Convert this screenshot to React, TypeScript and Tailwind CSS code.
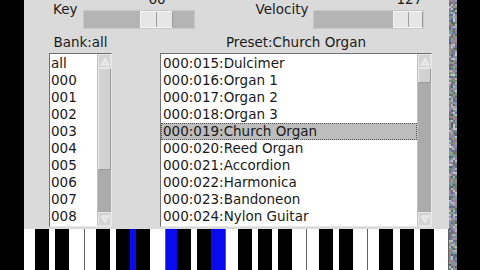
import React from "react";

const FONT = "font-['DejaVu_Sans',sans-serif]";

const banks = ["all", "000", "001", "002", "003", "004", "005", "006", "007", "008"];
const presets = [
  "000:015:Dulcimer",
  "000:016:Organ 1",
  "000:017:Organ 2",
  "000:018:Organ 3",
  "000:019:Church Organ",
  "000:020:Reed Organ",
  "000:021:Accordion",
  "000:022:Harmonica",
  "000:023:Bandoneon",
  "000:024:Nylon Guitar",
];

function Arrow({ up }: { up: boolean }) {
  return (
    <div className="h-[14px] w-full bg-[#d3d3d3] border border-[#e6e6e6] flex items-center justify-center">
      <svg width="10" height="9" viewBox="0 0 10 9">
        {up ? (
          <polygon points="5,1 9,8 1,8" fill="#e2e2e2" stroke="#f2f2f2" strokeWidth="1" />
        ) : (
          <polygon points="1,1 9,1 5,8" fill="#e2e2e2" stroke="#f2f2f2" strokeWidth="1" />
        )}
      </svg>
    </div>
  );
}

function Noise() {
  const rects: React.ReactNode[] = [];
  let s = 12345;
  const rnd = () => {
    s = (s * 1103515245 + 12345) % 2147483648;
    return s / 2147483648;
  };
  const palette = ["#8a8a9a", "#6e8f7a", "#9a7fa0", "#7a9aa0", "#b0b0b0", "#5f6f8f", "#8fa07a", "#a07a8a", "#707070", "#c0c0c8", "#4a6a6a", "#9090c0"];
  for (let y = 0; y < 270; y += 2) {
    for (let x = 0; x < 8; x += 2) {
      const c = palette[Math.floor(rnd() * palette.length)];
      rects.push(<rect key={`${x}-${y}`} x={x} y={y} width="2" height="2" fill={c} />);
    }
  }
  return (
    <svg width="8" height="270" viewBox="0 0 8 270" className="block">
      {rects}
    </svg>
  );
}

function Keyboard() {
  const whiteCount = 21;
  const W = 425 / whiteCount;
  const pressed = new Set([5, 7, 9]);
  const blackAfter = [0, 1, 3, 4, 5]; // C#, D#, F#, G#, A#
  const blacks: number[] = [];
  for (let o = 0; o < 3; o++) {
    for (const b of blackAfter) blacks.push(o * 7 + b + 1);
  }
  return (
    <div className="relative h-[41px] w-[425px] flex bg-white">
      {Array.from({ length: whiteCount }).map((_, i) => (
        <div
          key={i}
          className={`flex-1 h-full border-r border-[#606060] ${pressed.has(i) ? "bg-[#0a0aee]" : "bg-white"}`}
        />
      ))}
      {blacks.map((k) => (
        <div
          key={k}
          className="absolute top-0 h-full w-[14px] bg-black"
          style={{ left: `${k * W - 9}px` }}
        />
      ))}
    </div>
  );
}

export default function App() {
  return (
    <div className={`w-[480px] h-[270px] flex bg-black overflow-hidden ${FONT} text-[13.5px] text-[#1a1a1a]`}>
      <div className="w-[24px] h-full bg-black" />
      <div className="w-[425px] h-full bg-[#dadada] flex flex-col">
        {/* top sliders row */}
        <div className="h-[30px] flex items-start">
          <div className="ml-[29px] mt-[1px] leading-[16px]">Key</div>
          <div className="relative ml-[6px] mt-[10px] w-[112px] h-[19px] bg-[#b4b4b4] border border-[#c8c8c8] flex pl-[56px]">
            <div className="absolute left-[64px] -top-[20px] leading-[16px]">60</div>
            <div className="w-[33px] h-full bg-[#e6e6e6] border border-[#f5f5f5] border-r-[#9a9a9a] flex">
              <div className="flex-1 border-r border-[#a0a0a0]" />
              <div className="flex-1" />
            </div>
          </div>
          <div className="ml-[60px] mt-[1px] leading-[16px]">Velocity</div>
          <div className="relative ml-[5px] mt-[10px] w-[111px] h-[19px] bg-[#b4b4b4] border border-[#c8c8c8] flex pl-[79px]">
            <div className="absolute left-[82px] -top-[20px] leading-[16px]">127</div>
            <div className="w-[31px] h-full bg-[#e6e6e6] border border-[#f5f5f5] border-r-[#9a9a9a] flex">
              <div className="flex-1 border-r border-[#a0a0a0]" />
              <div className="flex-1" />
            </div>
          </div>
        </div>
        {/* labels row */}
        <div className="h-[23px] flex items-start pt-[4px] leading-[16px]">
          <div className="ml-[25px] w-[63px] text-center">Bank:all</div>
          <div className="ml-[48px] w-[272px] text-center">Preset:Church Organ</div>
        </div>
        {/* lists row */}
        <div className="h-[174px] flex">
          <div className="ml-[25px] w-[63px] h-full border border-[#707070] border-r-[#e8e8e8] border-b-[#e8e8e8] flex">
            <div className="flex-1 bg-white pt-[1px]">
              {banks.map((b) => (
                <div key={b} className="h-[17px] leading-[17px] pl-[1px]">
                  {b}
                </div>
              ))}
            </div>
            <div className="w-[14px] h-full flex flex-col bg-[#ababab] border-l border-[#c0c0c0]">
              <Arrow up />
              <div className="h-[102px] bg-[#d2d2d2] border border-[#e8e8e8] border-r-[#9a9a9a] border-b-[#9a9a9a]" />
              <div className="flex-1" />
              <Arrow up={false} />
            </div>
          </div>
          <div className="ml-[48px] w-[272px] h-full border border-[#707070] border-r-[#e8e8e8] border-b-[#e8e8e8] flex">
            <div className="flex-1 bg-white pt-[1px]">
              {presets.map((p, i) => (
                <div
                  key={p}
                  className={`h-[17px] leading-[15px] pl-[1px] whitespace-nowrap border ${
                    i === 4 ? "bg-[#bdbdbd] border-dotted border-[#555555]" : "border-transparent"
                  }`}
                >
                  {p}
                </div>
              ))}
            </div>
            <div className="w-[14px] h-full flex flex-col bg-[#ababab] border-l border-[#c0c0c0]">
              <Arrow up />
              <div className="h-[15px] bg-[#d2d2d2] border border-[#e8e8e8] border-r-[#9a9a9a] border-b-[#9a9a9a]" />
              <div className="flex-1" />
              <Arrow up={false} />
            </div>
          </div>
        </div>
        <div className="h-[2px]" />
        <Keyboard />
      </div>
      <div className="w-[8px] h-full">
        <Noise />
      </div>
      <div className="flex-1 h-full bg-black" />
    </div>
  );
}
